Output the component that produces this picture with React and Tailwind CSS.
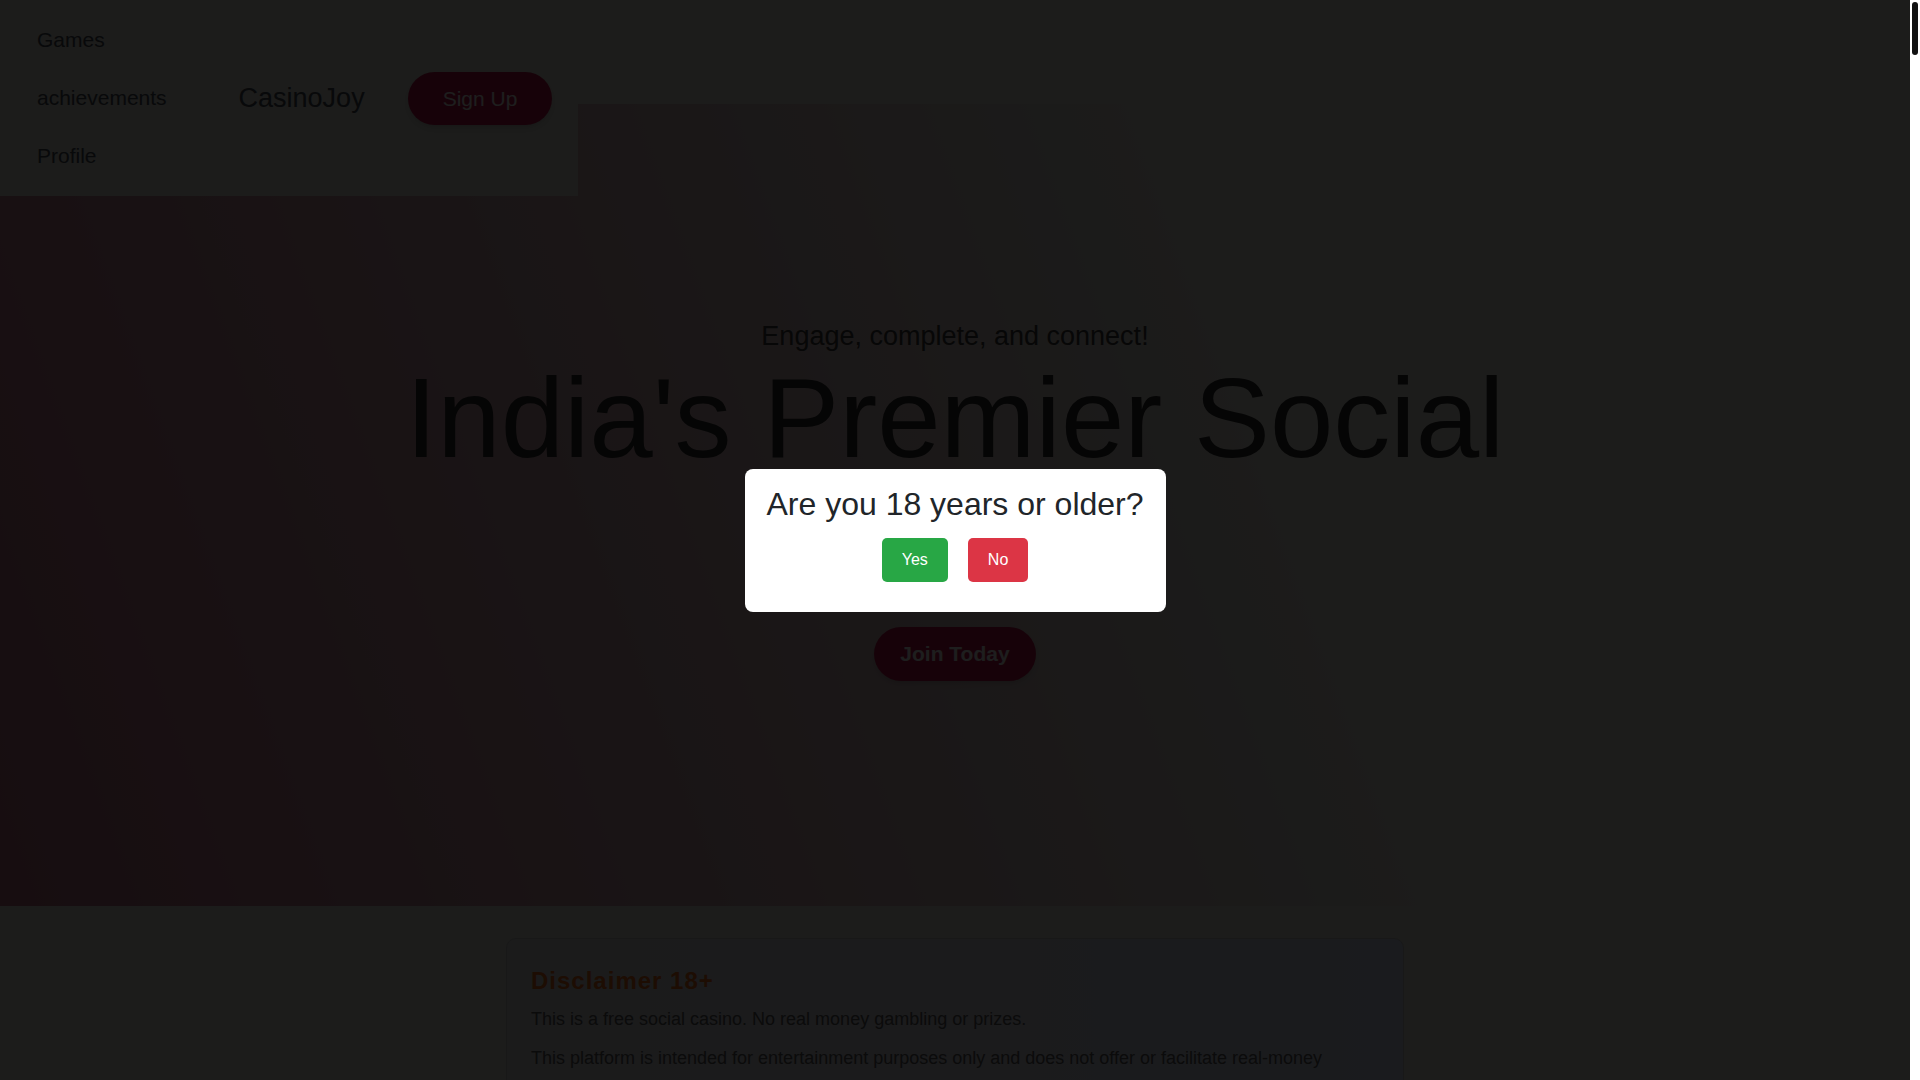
import React from 'react';

const navLinks = ['Games', 'achievements', 'Profile'];

const AgeGate = () => (
    <div className="fixed top-0 bottom-0 left-0 right-[10px] z-40 flex items-center justify-center bg-black/[0.88]">
        <div className="w-[421px] rounded-lg bg-white px-5 pt-[16px] pb-[30px] text-center">
            <h2 className="text-[32px] leading-[38px] text-[#212529]">Are you 18 years or older?</h2>
            <div className="mt-[15px] flex justify-center gap-5">
                <button className="h-[44px] rounded-[5px] bg-[#28a745] px-5 text-base text-white">Yes</button>
                <button className="h-[44px] rounded-[5px] bg-[#dc3545] px-5 text-base text-white">No</button>
            </div>
        </div>
    </div>
);

const App = () => {
    return (
        <div className="flex h-screen overflow-hidden bg-[#e1e1d9] font-['Liberation_Sans',Arial,sans-serif]">
            <div className="min-w-0 flex-1">
                {/* Header */}
                <header className="relative z-10 h-[104px]">
                    <div className="flex h-[196px] w-[578px] items-center bg-[#e1e1d9] pl-[37px]">
                        <ul className="flex flex-col gap-[34px] text-[21px] leading-[24px] text-[#454b57]">
                            {navLinks.map((link) => (
                                <li key={link}>{link}</li>
                            ))}
                        </ul>
                        <a className="ml-[72px] text-[27px] leading-[32px] text-[#454b57]">CasinoJoy</a>
                        <button className="ml-[43px] rounded-full bg-[#b8174a] px-[35px] py-[14px] text-[21px] leading-[25px] text-[#f2f2f2] shadow-md">
                            Sign Up
                        </button>
                    </div>
                </header>

                {/* Hero */}
                <section className="flex h-[802px] flex-col items-center bg-linear-[70deg] from-[#bb6c84] to-[#e1e1d9] to-65% pt-[216px] text-center">
                    <p className="text-[27px] leading-[32px] text-[#3a3a3a]">Engage, complete, and connect!</p>
                    <h1 className="max-w-[1200px] text-[114px] leading-[132px] text-[#2a2a2a]">India's Premier Social Casino</h1>
                    <button className="mt-[11px] h-[54px] rounded-full bg-[#b8174a] px-[26px] text-[21px] font-bold text-[#f2f2f2] shadow-md">
                        Join Today
                    </button>
                </section>

                {/* Disclaimer */}
                <section className="px-4 pt-8">
                    <div className="mx-auto w-[898px] rounded-[10px] border border-[#c4c4c4] bg-linear-to-r from-[#dadbdd] via-[#d9dce4] to-[#d3ddf1] p-6">
                        <h3 className="mb-[6px] text-[24px] leading-[36px] font-bold tracking-[1px] text-[#e8691a]">Disclaimer 18+</h3>
                        <p className="mb-[10px] text-[18px] leading-[28.8px] text-[#5a5a5a]">
                            This is a free social casino. No real money gambling or prizes.
                        </p>
                        <p className="mb-[10px] text-[18px] leading-[28.8px] text-[#5a5a5a]">
                            This platform is intended for entertainment purposes only and does not offer or facilitate real-money
                            gambling. Virtual coins have no cash value and cannot be exchanged for money or prizes.
                        </p>
                        <p className="text-[18px] leading-[28.8px] text-[#5a5a5a]">
                            Practice or success at social casino gaming does not imply future success at real money gambling.
                        </p>
                    </div>
                </section>
            </div>

            {/* Page scrollbar */}
            <div className="w-[10px] shrink-0 bg-white pt-[2px]">
                <div className="mx-[2px] h-[53px] rounded-full bg-[#111]"></div>
            </div>

            <AgeGate />
        </div>
    );
};

export default App;
